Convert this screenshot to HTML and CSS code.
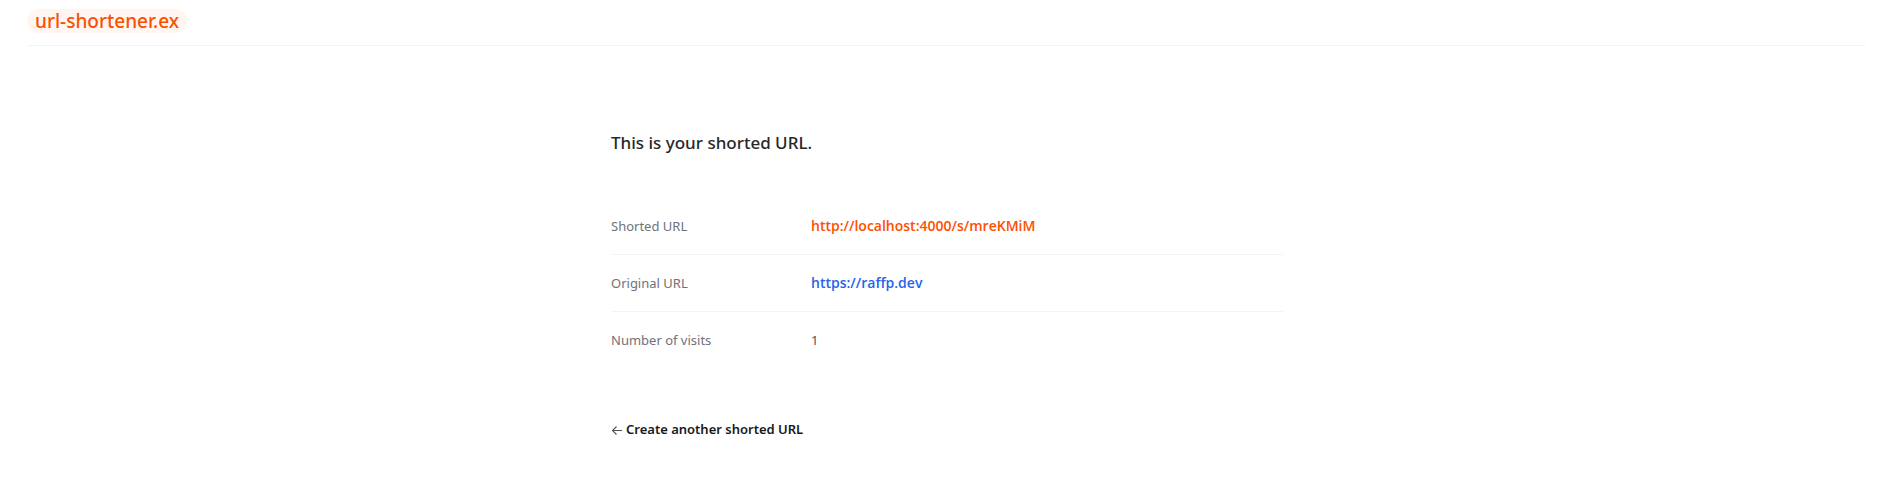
FILE: index.html
```html
<!DOCTYPE html>
<html lang="en">
<head>
<meta charset="utf-8">
<title>url-shortener.ex</title>
<link rel="stylesheet" href="styles.css">
</head>
<body>
<header class="page-header">
  <div class="header-bar"><a class="brand" href="#">url-shortener.ex</a></div>
</header>
<main class="page-main">
  <h1 class="title">This is your shorted URL.</h1>
  <dl class="details">
    <div class="row"><dt>Shorted URL</dt><dd><a class="short-link" href="#">http://localhost:4000/s/mreKMiM</a></dd></div>
    <div class="row"><dt>Original URL</dt><dd><a class="original-link" href="#">https://raffp.dev</a></dd></div>
    <div class="row"><dt>Number of visits</dt><dd>1</dd></div>
  </dl>
  <a class="back" href="#">
    <svg class="arrow" viewBox="0 0 12 12" aria-hidden="true"><path d="M11 7.5H1.5M5.5 3.5l-4 4 4 4" fill="none" stroke="#52525b" stroke-width="1.1"/></svg>
    <span>Create another shorted URL</span>
  </a>
</main>
</body>
</html>
```
FILE: styles.css
```css
* {
  box-sizing: border-box;
}

body {
  margin: 0;
  background: #fff;
  color: #18181b;
  font-family: "Segoe UI", "Noto Sans", "Open Sans", sans-serif;
  font-size: 13px;
  line-height: 24px;
}

a {
  text-decoration: none;
}

.page-header {
  padding: 0 28px 0 27px;
}

.header-bar {
  display: flex;
  padding: 9px 0 12px;
  border-bottom: 1px solid #f4f4f5;
}

.brand {
  padding: 0 8px;
  border-radius: 12px;
  background: #fff5f1;
  color: #fd4f00;
  font-size: 19px;
  font-weight: 500;
}

.page-main {
  max-width: 672px;
  margin: 0 auto;
  padding: 81px 0 32px;
}

.title {
  margin: 0;
  font-size: 17px;
  font-weight: 500;
  line-height: 32px;
  color: #27272a;
}

.details {
  margin: 39px 0 0;
}

.row {
  display: flex;
  gap: 32px;
  padding: 16px 0;
}

.row + .row {
  border-top: 1px solid #f4f4f5;
}

.row dt {
  flex: 0 0 25%;
  color: #71717a;
}

.row dd {
  margin: 0;
  color: #52525b;
}

.short-link,
.original-link {
  font-family: "Segoe UI", "Open Sans", sans-serif;
  font-size: 14px;
  font-weight: 600;
}

.short-link {
  color: #fd4f00;
}

.original-link {
  color: #2563eb;
}

.back {
  display: inline-flex;
  align-items: center;
  gap: 3px;
  margin-top: 49px;
  color: #18181b;
  font-weight: 600;
}

.arrow {
  width: 12px;
  height: 12px;
}
```
